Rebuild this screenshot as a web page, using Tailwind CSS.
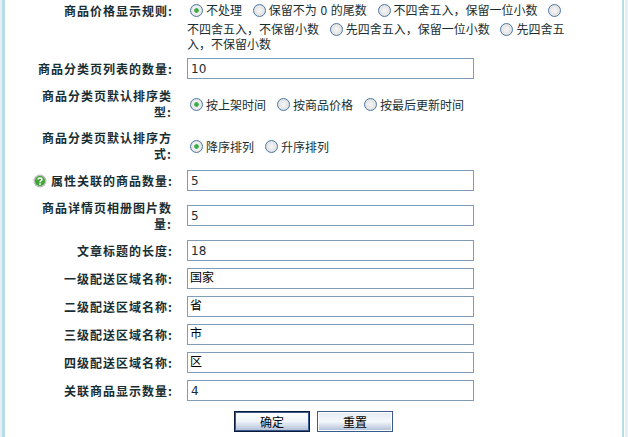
<!DOCTYPE html>
<html lang="zh-CN">
<head>
  <meta charset="UTF-8" />
  <title>商品显示设置</title>
  <script src="https://cdn.jsdelivr.net/npm/@tailwindcss/browser@4"></script>
</head>
<body class="bg-white overflow-hidden text-[12px] leading-[15px] text-[#192e32] font-['Noto_Sans_CJK_SC',sans-serif]">
  <div class="h-[437px] w-[628px] overflow-hidden border-l-2 border-r-[3px] border-[#e4eef6]">
    <div class="h-full mr-px border-l-[3px] border-r-2 border-[#b9dde6]">
    <form class="flex flex-col">
      <!-- price rule -->
      <div class="flex h-[55px]">
        <div class="w-[167px] shrink-0 pt-[3px] text-right font-bold tracking-[1px]">商品价格显示规则<span class="tracking-[0px]">:</span></div>
        <div class="ml-[15px] w-[380px] -mt-[2px]">
          <label><input type="radio" name="price" checked class="appearance-none align-[-2px] w-[13px] h-[13px] mt-[6px] mx-[3px] rounded-full border-[1.5px] border-[#4a78a5] bg-[radial-gradient(circle,#3fae49_0,#3fae49_25%,#f2f2f2_35%,#d8d8d8_100%)]">不处理</label>
          <label class="ml-[5px]"><input type="radio" name="price" class="appearance-none align-[-2px] w-[13px] h-[13px] mt-[6px] mx-[3px] rounded-full border-[1.5px] border-[#4a78a5] bg-[radial-gradient(circle,#f6f6f6_0,#d8d8d8_100%)]">保留不为 <span class="mx-px">0</span> 的尾数</label>
          <label class="ml-[5px]"><input type="radio" name="price" class="appearance-none align-[-2px] w-[13px] h-[13px] mt-[6px] mx-[3px] rounded-full border-[1.5px] border-[#4a78a5] bg-[radial-gradient(circle,#f6f6f6_0,#d8d8d8_100%)]">不四舍五入，保留一位小数</label>
          <label class="ml-[5px]"><input type="radio" name="price" class="appearance-none align-[-2px] w-[13px] h-[13px] mt-[6px] mx-[3px] rounded-full border-[1.5px] border-[#4a78a5] bg-[radial-gradient(circle,#f6f6f6_0,#d8d8d8_100%)]">不四舍五入，不保留小数</label>
          <label class="ml-[5px]"><input type="radio" name="price" class="appearance-none align-[-2px] w-[13px] h-[13px] mt-[6px] mx-[3px] rounded-full border-[1.5px] border-[#4a78a5] bg-[radial-gradient(circle,#f6f6f6_0,#d8d8d8_100%)]">先四舍五入，保留一位小数</label>
          <label class="ml-[5px]"><input type="radio" name="price" class="appearance-none align-[-2px] w-[13px] h-[13px] mt-[6px] mx-[3px] rounded-full border-[1.5px] border-[#4a78a5] bg-[radial-gradient(circle,#f6f6f6_0,#d8d8d8_100%)]">先四舍五入，不保留小数</label>
        </div>
      </div>

      <div class="flex items-center h-[28px] pb-px">
        <div class="w-[167px] shrink-0 text-right font-bold tracking-[1px]">商品分类页列表的数量<span class="tracking-[0px]">:</span></div>
        <input value="10" class="ml-[15px] w-[287px] h-[21px] border border-[#7f9db9] px-[3px] outline-none font-['DejaVu_Sans']">
      </div>

      <div class="flex items-center h-[42px]">
        <div class="w-[167px] shrink-0 pl-[34px] text-right font-bold tracking-[1px] leading-[16px]">商品分类页默认排序类型:</div>
        <div class="ml-[15px] flex items-center gap-[8px]">
          <label class="flex items-center"><input type="radio" name="sort_type" checked class="appearance-none w-[13px] h-[13px] mx-[3px] rounded-full border-[1.5px] border-[#4a78a5] bg-[radial-gradient(circle,#3fae49_0,#3fae49_25%,#f2f2f2_35%,#d8d8d8_100%)]">按上架时间</label>
          <label class="flex items-center"><input type="radio" name="sort_type" class="appearance-none w-[13px] h-[13px] mx-[3px] rounded-full border-[1.5px] border-[#4a78a5] bg-[radial-gradient(circle,#f6f6f6_0,#d8d8d8_100%)]">按商品价格</label>
          <label class="flex items-center"><input type="radio" name="sort_type" class="appearance-none w-[13px] h-[13px] mx-[3px] rounded-full border-[1.5px] border-[#4a78a5] bg-[radial-gradient(circle,#f6f6f6_0,#d8d8d8_100%)]">按最后更新时间</label>
        </div>
      </div>

      <div class="flex items-center h-[42px]">
        <div class="w-[167px] shrink-0 pl-[34px] text-right font-bold tracking-[1px] leading-[16px]">商品分类页默认排序方式:</div>
        <div class="ml-[15px] flex items-center gap-[8px]">
          <label class="flex items-center"><input type="radio" name="sort_order" checked class="appearance-none w-[13px] h-[13px] mx-[3px] rounded-full border-[1.5px] border-[#4a78a5] bg-[radial-gradient(circle,#3fae49_0,#3fae49_25%,#f2f2f2_35%,#d8d8d8_100%)]">降序排列</label>
          <label class="flex items-center"><input type="radio" name="sort_order" class="appearance-none w-[13px] h-[13px] mx-[3px] rounded-full border-[1.5px] border-[#4a78a5] bg-[radial-gradient(circle,#f6f6f6_0,#d8d8d8_100%)]">升序排列</label>
        </div>
      </div>

      <div class="flex items-center h-[28px] pb-px">
        <div class="w-[167px] shrink-0 flex items-center justify-end font-bold tracking-[1px]">
          <svg class="mr-[4px] w-[14px] h-[14px]" viewBox="0 0 14 14">
            <circle cx="7" cy="7" r="6.5" fill="#bdbdbd" />
            <circle cx="7" cy="7" r="5" fill="#3fa535" />
            <path d="M5 5.6C5 3.6 9 3.6 9 5.6C9 7 7 6.8 7 8.2" fill="none" stroke="#fff" stroke-width="1.5" />
            <rect x="6.2" y="9.2" width="1.6" height="1.6" fill="#fff" />
          </svg><span>属性关联的商品数量<span class="tracking-[0px]">:</span></span>
        </div>
        <input value="5" class="ml-[15px] w-[287px] h-[21px] border border-[#7f9db9] px-[3px] outline-none font-['DejaVu_Sans']">
      </div>

      <div class="flex items-center h-[42px] pb-px">
        <div class="w-[167px] shrink-0 pl-[34px] text-right font-bold tracking-[1px] leading-[16px]">商品详情页相册图片数量:</div>
        <input value="5" class="ml-[15px] w-[287px] h-[21px] border border-[#7f9db9] px-[3px] outline-none font-['DejaVu_Sans']">
      </div>

      <div class="flex items-center h-[28px] pb-px">
        <div class="w-[167px] shrink-0 text-right font-bold tracking-[1px]">文章标题的长度<span class="tracking-[0px]">:</span></div>
        <input value="18" class="ml-[15px] w-[287px] h-[21px] border border-[#7f9db9] px-[3px] outline-none font-['DejaVu_Sans']">
      </div>
      <div class="flex items-center h-[28px] pb-px">
        <div class="w-[167px] shrink-0 text-right font-bold tracking-[1px]">一级配送区域名称<span class="tracking-[0px]">:</span></div>
        <input value="国家" class="ml-[15px] w-[287px] h-[21px] border border-[#7f9db9] px-[2px] pb-[5px] leading-[12px] outline-none text-black">
      </div>
      <div class="flex items-center h-[28px] pb-px">
        <div class="w-[167px] shrink-0 text-right font-bold tracking-[1px]">二级配送区域名称<span class="tracking-[0px]">:</span></div>
        <input value="省" class="ml-[15px] w-[287px] h-[21px] border border-[#7f9db9] px-[2px] pb-[5px] leading-[12px] outline-none text-black">
      </div>
      <div class="flex items-center h-[28px] pb-px">
        <div class="w-[167px] shrink-0 text-right font-bold tracking-[1px]">三级配送区域名称<span class="tracking-[0px]">:</span></div>
        <input value="市" class="ml-[15px] w-[287px] h-[21px] border border-[#7f9db9] px-[2px] pb-[5px] leading-[12px] outline-none text-black">
      </div>
      <div class="flex items-center h-[28px] pb-px">
        <div class="w-[167px] shrink-0 text-right font-bold tracking-[1px]">四级配送区域名称<span class="tracking-[0px]">:</span></div>
        <input value="区" class="ml-[15px] w-[287px] h-[21px] border border-[#7f9db9] px-[2px] pb-[5px] leading-[12px] outline-none text-black">
      </div>
      <div class="flex items-center h-[28px] pb-px">
        <div class="w-[167px] shrink-0 text-right font-bold tracking-[1px]">关联商品显示数量<span class="tracking-[0px]">:</span></div>
        <input value="4" class="ml-[15px] w-[287px] h-[21px] border border-[#7f9db9] px-[3px] outline-none font-['DejaVu_Sans']">
      </div>

      <div class="flex gap-[7px] pl-[229px] pt-[6px]">
        <button type="button" class="w-[76px] h-[21px] border border-[#0a1a3a] shadow-[inset_0_0_0_1px_#3a5a8c] bg-linear-to-b from-white via-[#eef3fa] to-[#aebcd6] text-black">确定</button>
        <button type="button" class="w-[76px] h-[21px] border border-[#3a5a8c] shadow-[inset_0_0_0_1px_#fff] bg-linear-to-b from-[#e6ebf3] via-[#f4f7fb] to-[#aebcd6] text-black">重置</button>
      </div>
    </form>
    </div>
  </div>
</body>
</html>
